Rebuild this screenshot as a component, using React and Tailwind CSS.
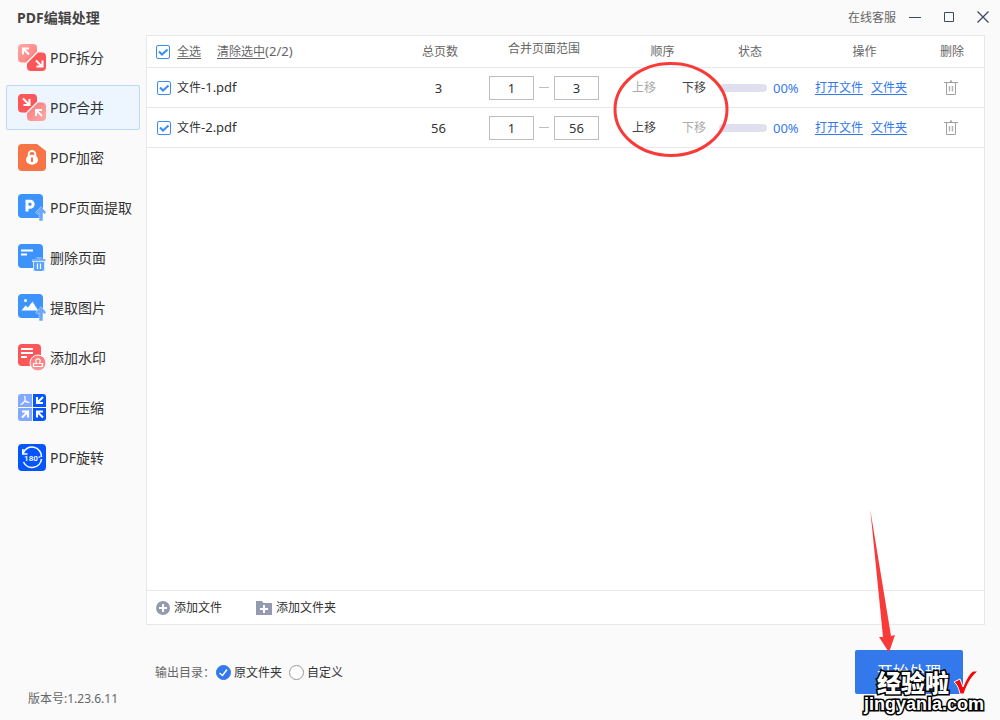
import React, { useState } from "react";

function SplitIcon({ merge }) {
  const id = merge ? "merge-fade" : "split-fade";
  return (
    <svg width="28" height="28" viewBox="0 0 28 28" aria-hidden="true">
      <defs>
        <linearGradient id={id} x1={merge ? 1 : 0} y1={merge ? 1 : 0} x2={merge ? 0 : 1} y2={merge ? 0 : 1}>
          <stop offset="0" stopColor="#ffaaa8" />
          <stop offset="1" stopColor="#fd7677" />
        </linearGradient>
      </defs>
      <path d="M4 0H15a4 4 0 0 1 4 4V7.500L8 18.500H4a4 4 0 0 1-4-4V4a4 4 0 0 1 4-4z" fill={merge ? "#fd5659" : `url(#${id})`} />
      <path d="M20 8.500H24a4 4 0 0 1 4 4V23a4 4 0 0 1-4 4H13a4 4 0 0 1-4-4V19.500z" fill={merge ? `url(#${id})` : "#fd5659"} />
      <g fill="none" stroke="#fff" strokeWidth="2">
        {merge ? (
          <>
            <path d="M5 4.500L11 10.500M11.500 5V11H5.500" />
            <path d="M24 22L18.500 16.500M18 22V16H24" />
          </>
        ) : (
          <>
            <path d="M11 10.500L5.500 5M5 10.500V4.500H11" />
            <path d="M18 16.500L24 22.500M24.500 16.500V22.500H18.500" />
          </>
        )}
      </g>
    </svg>
  );
}

function LockIcon() {
  return (
    <svg width="28" height="28" viewBox="0 0 28 28" aria-hidden="true">
      <path d="M4 0H19L28 7V23a4 4 0 0 1-4 4H4a4 4 0 0 1-4-4V4a4 4 0 0 1 4-4z" fill="#f67446" />
      <path d="M10.700 13V10.300a3.300 3.300 0 0 1 6.600 0V13" fill="none" stroke="#fff" strokeWidth="1.800" />
      <ellipse cx="14" cy="15.800" rx="6" ry="5" fill="#fff" />
      <path d="M14 13.500V18" stroke="#f67446" strokeWidth="2" />
    </svg>
  );
}

function UpArrow() {
  return (
    <path
      d="M23 12.800L28 18.300L26.500 20L24.700 18.300V26.700H21.300V18.300L19.500 20L18 18.300z"
      fill="#6aa8fc"
      stroke="#fafafa"
      strokeWidth="0.8"
      paintOrder="stroke"
    />
  );
}

function ExtractPageIcon() {
  return (
    <svg width="28" height="28" viewBox="0 0 28 28" aria-hidden="true">
      <rect width="25" height="24" rx="4" fill="#3b93fb" />
      <path d="M9 17.500V7.300H12.200a2.800 2.800 0 0 1 0 5.900H9" fill="none" stroke="#fff" strokeWidth="3" />
      <UpArrow />
    </svg>
  );
}

function DeletePageIcon() {
  return (
    <svg width="28" height="28" viewBox="0 0 28 28" aria-hidden="true">
      <rect width="25" height="24" rx="4" fill="#3b93fb" />
      <path d="M3 6.500H15M3 10.500H9" stroke="#fff" strokeWidth="2" />
      <path d="M14 15H18V13H24V15H27V27H15V18H14z" fill="#d5e7fe" />
      <path d="M14 16H27.500M18.500 16V14H23.500V16" fill="none" stroke="#5aa3fb" strokeWidth="1.600" />
      <path d="M16 18H26V25a2 2 0 0 1-2 2H18a2 2 0 0 1-2-2z" fill="#5aa3fb" />
      <path d="M19.500 19.500V25M22.500 19.500V25" stroke="#fff" strokeWidth="1.200" />
    </svg>
  );
}

function ExtractImageIcon() {
  return (
    <svg width="28" height="28" viewBox="0 0 28 28" aria-hidden="true">
      <rect width="25" height="24" rx="4" fill="#3b93fb" />
      <circle cx="7.500" cy="6.500" r="1.500" fill="#fff" />
      <path d="M3.500 16.500L7.500 11.500L10 13.500L14.500 7.500L20 16.500z" fill="#fff" />
      <UpArrow />
    </svg>
  );
}

function WatermarkIcon() {
  return (
    <svg width="28" height="28" viewBox="0 0 28 28" aria-hidden="true">
      <defs>
        <linearGradient id="stamp-fade" x1="0" y1="0" x2="0" y2="1">
          <stop offset="0" stopColor="#fd7274" />
          <stop offset="1" stopColor="#ff9a9a" />
        </linearGradient>
      </defs>
      <rect width="23" height="22" rx="4" fill="#fd5659" />
      <path d="M3 5H15M3 9H15M3 13H9" stroke="#fff" strokeWidth="1.800" />
      <circle cx="20" cy="19" r="8" fill="url(#stamp-fade)" stroke="#fff" strokeWidth="1" />
      <path d="M18.800 19.500C17 17 17.700 14.800 20 14.800S23 17 21.200 19.500H24.500V22.500H15.500V19.500z" fill="none" stroke="#fff" strokeWidth="1.200" />
    </svg>
  );
}

function CompressIcon() {
  return (
    <svg width="28" height="28" viewBox="0 0 28 28" aria-hidden="true">
      <path d="M3 0H14V13H0V3a3 3 0 0 1 3-3zM0 14H14V27H3a3 3 0 0 1-3-3z" fill="#82a9fd" />
      <path d="M15 0H25a3 3 0 0 1 3 3V13H15zM15 14H28V24a3 3 0 0 1-3 3H15z" fill="#0555fd" />
      <path d="M6.500 2Q8 6 6 8Q4.500 9.800 2.500 10.500M6.500 6.500Q8.500 8.500 11.500 8.500" fill="none" stroke="#fff" strokeWidth="1.200" />
      <g fill="none" stroke="#fff" strokeWidth="2.100">
        <path d="M25 3L19.500 8.500M19 3V9H25" />
        <path d="M4 23.500L9.500 18M4 17.500H10V23.500" />
        <path d="M25 23.500L19.500 18M25 17.500H19V23.500" />
      </g>
    </svg>
  );
}

function RotateIcon() {
  return (
    <svg width="28" height="28" viewBox="0 0 28 28" aria-hidden="true">
      <rect width="28" height="27" rx="4" fill="#0555fd" />
      <path d="M5 9.500A9.500 9.500 0 0 1 23.500 13M23.500 15A9.500 9.500 0 0 1 5.500 18" fill="none" stroke="#fff" strokeWidth="1.600" />
      <path d="M4.800 5V10H9.500" fill="none" stroke="#fff" strokeWidth="1.600" />
      <text x="14.500" y="17" textAnchor="middle" fontSize="8" fontWeight="600" fontFamily="Roboto, sans-serif" fill="#fff">180°</text>
    </svg>
  );
}

const NAV = [
  { label: "PDF拆分", icon: <SplitIcon /> },
  { label: "PDF合并", icon: <SplitIcon merge /> },
  { label: "PDF加密", icon: <LockIcon /> },
  { label: "PDF页面提取", icon: <ExtractPageIcon /> },
  { label: "删除页面", icon: <DeletePageIcon /> },
  { label: "提取图片", icon: <ExtractImageIcon /> },
  { label: "添加水印", icon: <WatermarkIcon /> },
  { label: "PDF压缩", icon: <CompressIcon /> },
  { label: "PDF旋转", icon: <RotateIcon /> },
];

const FILES = [
  { name: "文件", suffix: "-1.pdf", pages: 3 },
  { name: "文件", suffix: "-2.pdf", pages: 56 },
];

function Tick({ id, label, checked, onChange }) {
  return (
    <span className="grid size-[14px] shrink-0">
      <input
        id={id}
        type="checkbox"
        aria-label={label}
        checked={checked}
        onChange={onChange}
        className="peer col-start-1 row-start-1 size-[14px] appearance-none rounded-[2px] border border-[#3b8cf5] bg-white"
      />
      <svg viewBox="0 0 14 14" className="pointer-events-none invisible col-start-1 row-start-1 size-[14px] peer-checked:visible" aria-hidden="true">
        <path d="M3 6.500L6 9.500L11.500 4.500" fill="none" stroke="#3b8cf5" strokeWidth="2" />
      </svg>
    </span>
  );
}

function TrashIcon() {
  return (
    <svg width="16" height="16" viewBox="0 0 16 16" fill="none" stroke="#a0a0a0" aria-hidden="true">
      <path d="M1 2.500H15M3.500 2.500V14.500H12.500V2.500" />
      <path d="M8 0.500V2.500" strokeWidth="2" />
      <path d="M6.500 6V11.500M9.500 6V11.500" stroke="#b4b4b4" strokeWidth="1.500" />
    </svg>
  );
}

function Radio({ label, value, current, onPick }) {
  return (
    <label className="flex items-center gap-[3px] text-[#333]">
      <span className="grid size-[15px]">
        <input
          type="radio"
          name="output"
          value={value}
          checked={current === value}
          onChange={() => onPick(value)}
          className="peer col-start-1 row-start-1 size-[15px] appearance-none rounded-full border border-[#999] bg-white checked:border-[#3379ec] checked:bg-[#3379ec]"
        />
        <svg viewBox="0 0 15 15" className="pointer-events-none invisible col-start-1 row-start-1 size-[15px] peer-checked:visible" aria-hidden="true">
          <path d="M3.500 8L6.500 10.500L11 4.500" fill="none" stroke="#fff" strokeWidth="1.500" />
        </svg>
      </span>
      {label}
    </label>
  );
}

function FileRow({ file, index, count, checked, onToggle }) {
  const cell = "h-10 border-b border-[#e8e8e8] p-0";
  const box = "h-6 w-[45px] border border-[#bdbdbd] bg-white text-center text-[13px] text-[#333]";
  const title = file.name + file.suffix;
  return (
    <tr>
      <td className={cell}>
        <div className="flex items-center gap-[6px] pl-[10px]">
          <Tick id={"file-" + index} label={title} checked={checked} onChange={onToggle} />
          <label htmlFor={"file-" + index}>
            {file.name}
            <span className="text-[13px]">{file.suffix}</span>
          </label>
        </div>
      </td>
      <td className={cell + " text-center text-[13px]"}>
        <div className="pr-[3px]">{file.pages}</div>
      </td>
      <td className={cell}>
        <div className="flex items-center justify-center gap-[5px]">
          <input aria-label={title + " 起始页"} defaultValue="1" className={box} />
          <span className="h-px w-[10px] bg-[#bdbdbd]" />
          <input aria-label={title + " 结束页"} defaultValue={file.pages} className={box} />
        </div>
      </td>
      <td className={cell}>
        <div className="flex gap-[26px] pl-6">
          <button type="button" disabled={index === 0} className="text-[#444] disabled:text-[#aaa]">上移</button>
          <button type="button" disabled={index === count - 1} className="text-[#444] disabled:text-[#aaa]">下移</button>
        </div>
      </td>
      <td className={cell}>
        <div className="flex items-center gap-[6px] pl-[2px]">
          <span className="h-2 w-12 rounded-full bg-[#e0dff0]" />
          <span className="text-[13px] text-[#3379ec]">00%</span>
        </div>
      </td>
      <td className={cell}>
        <div className="flex gap-2 pl-[9px] text-[#3379ec] underline underline-offset-2">
          <a href="#open">打开文件</a>
          <a href="#folder">文件夹</a>
        </div>
      </td>
      <td className={cell}>
        <div className="flex justify-center pr-[5px]">
          <button type="button" aria-label="删除">
            <TrashIcon />
          </button>
        </div>
      </td>
    </tr>
  );
}

export default function App() {
  const [active, setActive] = useState("PDF合并");
  const [picked, setPicked] = useState([true, true]);
  const [output, setOutput] = useState("source");
  const all = picked.every(Boolean);
  const head = "h-8 border-b border-[#e8e8e8] p-0 font-normal";

  return (
    <div className="relative flex min-h-screen flex-col overflow-hidden bg-[#fafafa] font-['Noto_Sans','Noto_Sans_CJK_SC',sans-serif] text-[12px] leading-4 text-[#333]">
      <header className="flex h-[35px] items-center justify-between pr-[10px] pl-[17px]">
        <h1 className="text-[14px] font-bold text-[#444]">PDF编辑处理</h1>
        <div className="flex items-center gap-3 text-[#3d4a63]">
          <a href="#service" className="text-[#666]">在线客服</a>
          <div className="flex gap-5">
            <button type="button" aria-label="最小化">
              <svg width="14" height="14" viewBox="0 0 14 14" stroke="currentColor" aria-hidden="true"><path d="M1 6.500H13" /></svg>
            </button>
            <button type="button" aria-label="最大化">
              <svg width="14" height="14" viewBox="0 0 14 14" fill="none" stroke="currentColor" aria-hidden="true"><path d="M2.500 1.500H11.500V10.500H2.500z" /></svg>
            </button>
            <button type="button" aria-label="关闭">
              <svg width="14" height="14" viewBox="0 0 14 14" fill="none" stroke="currentColor" strokeWidth="1.300" aria-hidden="true"><path d="M1.500 0.500L12.500 11.500M12.500 0.500L1.500 11.500" /></svg>
            </button>
          </div>
        </div>
      </header>

      <div className="flex flex-1">
        <aside className="flex w-[146px] shrink-0 flex-col justify-between pr-[6px] pb-[13px] pl-[6px]">
          <nav className="flex flex-col gap-[5px]">
            {NAV.map((item) => (
              <button
                key={item.label}
                type="button"
                onClick={() => setActive(item.label)}
                className={
                  "flex h-[45px] items-center gap-1 rounded-[2px] border pl-[11px] text-[14px] whitespace-nowrap " +
                  (active === item.label ? "border-[#bcd8fb] bg-[#edf5ff]" : "border-transparent")
                }
              >
                {item.icon}
                {item.label}
              </button>
            ))}
          </nav>
          <p className="pl-[22px] text-[#666]">版本号:1.23.6.11</p>
        </aside>

        <main className="flex min-w-0 flex-1 flex-col pr-[15px]">
          <section className="flex flex-1 flex-col justify-between border border-[#e8e8e8] bg-white">
            <table className="w-full table-fixed border-separate border-spacing-0">
              <colgroup>
                <col />
                <col className="w-20" />
                <col className="w-[128px]" />
                <col className="w-[109px]" />
                <col className="w-[89px]" />
                <col className="w-[117px]" />
                <col className="w-[61px]" />
              </colgroup>
              <thead className="text-[#666]">
                <tr>
                  <th className={head}>
                    <div className="flex items-center gap-[7px] pl-[9px]">
                      <Tick id="all" label="全选" checked={all} onChange={() => setPicked(picked.map(() => !all))} />
                      <label htmlFor="all" className="underline underline-offset-2">全选</label>
                      <button type="button" className="pl-[9px]" onClick={() => setPicked(picked.map(() => false))}>
                        <span className="underline underline-offset-2">清除选中</span>
                        <span className="text-[13px]">({picked.filter(Boolean).length}/{picked.length})</span>
                      </button>
                    </div>
                  </th>
                  <th className={head}>总页数</th>
                  <th className={head}><div className="pb-[6px]">合并页面范围</div></th>
                  <th className={head}>顺序</th>
                  <th className={head + " text-left"}><div className="pl-[21px]">状态</div></th>
                  <th className={head}>操作</th>
                  <th className={head}><div className="pr-[3px]">删除</div></th>
                </tr>
              </thead>
              <tbody>
                {FILES.map((file, i) => (
                  <FileRow
                    key={file.suffix}
                    file={file}
                    index={i}
                    count={FILES.length}
                    checked={picked[i]}
                    onToggle={() => setPicked(picked.map((p, j) => (j === i ? !p : p)))}
                  />
                ))}
              </tbody>
            </table>
            <div className="flex h-[34px] items-center gap-[34px] border-t border-[#e8e8e8] pl-[9px]">
              <button type="button" className="flex items-center gap-1">
                <svg width="14" height="14" viewBox="0 0 14 14" aria-hidden="true">
                  <circle cx="7" cy="7" r="7" fill="#949bb0" />
                  <path d="M7 3V11M3 7H11" stroke="#fff" strokeWidth="2" />
                </svg>
                添加文件
              </button>
              <button type="button" className="flex items-center gap-1">
                <svg width="16" height="14" viewBox="0 0 16 14" aria-hidden="true">
                  <path d="M0 0H6L7.500 2H16V14H0z" fill="#949bb0" />
                  <path d="M8 4V12M4 8H12" stroke="#fff" strokeWidth="2" />
                </svg>
                添加文件夹
              </button>
            </div>
          </section>

          <footer className="flex items-center justify-between pt-[25px] pr-[22px] pb-[26px] pl-[9px]">
            <div className="flex items-center gap-px pt-px" role="radiogroup" aria-label="输出目录">
              <span className="text-[#666]">输出目录：</span>
              <div className="flex items-center gap-[7px]">
                <Radio label="原文件夹" value="source" current={output} onPick={setOutput} />
                <Radio label="自定义" value="custom" current={output} onPick={setOutput} />
              </div>
            </div>
            <button type="button" className="h-11 w-[108px] rounded-[2px] bg-[#3379ec] text-[16px] text-white">开始处理</button>
          </footer>
        </main>
      </div>

      <svg className="pointer-events-none absolute top-[60px] right-[270px]" width="118" height="98" viewBox="0 0 118 98" aria-hidden="true">
        <ellipse cx="59" cy="49.500" rx="56" ry="46" fill="none" stroke="#f83a38" strokeWidth="3" />
      </svg>
      <svg className="pointer-events-none absolute right-[104px] bottom-[67px]" width="28" height="144" viewBox="0 0 28 144" aria-hidden="true">
        <path d="M2.300 1L23 127L27 126L21 143.500L11 128L15 128z" fill="#f83a38" />
      </svg>
      <div className="pointer-events-none absolute right-[16px] bottom-[7px] flex flex-col items-end font-['Noto_Sans_CJK_SC',sans-serif] font-black text-white">
        <div className="flex items-center gap-1 pr-[5px]">
          <span className="text-[24px] leading-6 [-webkit-text-stroke:3px_#000] [paint-order:stroke]">经验啦</span>
          <svg width="26" height="26" viewBox="0 0 26 26" aria-hidden="true">
            <path d="M1 13L7 10L10 18C13 10 17 4 20 2H25C19 7 14 15 11 25H7C6 20 4 15 1 13z" fill="#f5090b" stroke="#fff" strokeWidth="1" />
          </svg>
        </div>
        <span className="font-['Liberation_Sans',sans-serif] text-[18px] leading-[18px] font-bold [-webkit-text-stroke:3px_#000] [paint-order:stroke]">jingyanla.com</span>
      </div>
    </div>
  );
}
